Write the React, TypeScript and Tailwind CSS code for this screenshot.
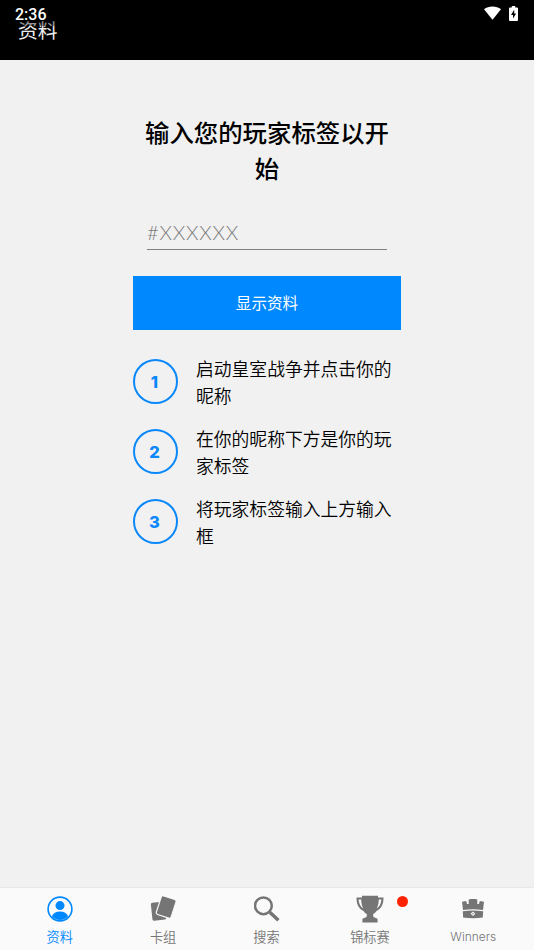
import type { ReactNode } from "react";
import clsx from "clsx";

interface Tab {
  id: string;
  label: string;
  icon: ReactNode;
  badge?: boolean;
}

const STEPS = [
  "启动皇室战争并点击你的昵称",
  "在你的昵称下方是你的玩家标签",
  "将玩家标签输入上方输入框",
];

function ProfileIcon() {
  return (
    <svg width="26" height="26" viewBox="0 0 26 26" fill="currentColor">
      <circle cx="13" cy="13" r="11.9" fill="none" stroke="currentColor" strokeWidth="1.6" />
      <circle cx="13" cy="9.6" r="4.5" />
      <path d="M4.9 20.2C6 17 9 15.4 13 15.4s7 1.6 8.1 4.8A11 11 0 0 1 13 24a11 11 0 0 1-8.1-3.8z" />
    </svg>
  );
}

function CardsIcon() {
  return (
    <svg width="26" height="26" viewBox="0 0 26 26" fill="currentColor">
      <rect x="1.6" y="6.2" width="14" height="18" rx="1.6" transform="rotate(-6 8.6 15)" />
      <rect
        x="8.4"
        y="1.2"
        width="15.6"
        height="19.6"
        rx="2"
        transform="rotate(18 16.2 11)"
        stroke="#fafafa"
        strokeWidth="1.2"
      />
    </svg>
  );
}

function SearchIcon() {
  return (
    <svg width="26" height="26" viewBox="0 0 26 26" fill="none" stroke="currentColor">
      <circle cx="9.4" cy="9.8" r="8.4" strokeWidth="2.5" />
      <path d="M15.8 16.2l8.6 8" strokeWidth="3.5" />
    </svg>
  );
}

function TrophyIcon() {
  return (
    <svg width="28" height="28" viewBox="0 0 28 28" fill="currentColor">
      <path d="M6 .8h16v1.8h5.5c0 7-2.3 11.3-7 13.4-1 1.5-2.2 2.5-3.3 3.1v2c0 1.1 1.1 1.7 3.3 2.2.8.2 1.1.7 1.1 1.4v2.8H6.4v-2.8c0-.7.3-1.2 1.1-1.4 2.2-.5 3.3-1.1 3.3-2.2v-2c-1.1-.6-2.3-1.6-3.3-3.1C2.8 13.9.5 9.6.5 2.600H6z" />
      <path
        d="M2.6 4.6h2.6c.1 3.4.7 6.1 1.9 8.8-2.8-1.7-4.2-4.700-4.500-8.800zM25.400 4.600h-2.600c-.1 3.400-.7 6.100-1.900 8.800 2.800-1.700 4.200-4.700 4.500-8.800z"
        fill="#fafafa"
      />
    </svg>
  );
}

function CrownIcon() {
  return (
    <svg width="24" height="22" viewBox="0 0 24 22" fill="currentColor">
      <path d="M1 3.8l4.2-.9.8 3h1.700V1.500c2.900-.6 5.700-.6 8.600 0v4.400H18l.8-3 4.200.9-1 8.300c-6.700-1.200-13.300-1.200-20 0z" />
      <path d="M1.800 13.300c6.800-1.100 13.600-1.100 20.400 0l-.4 6.300c-6.500 1-13.100 1-19.600 0z" />
      <path d="M12 13.400l2.400 2.300-2.400 2.300-2.400-2.300z" fill="#fafafa" />
      <path d="M12 14.900l.9.800-.9.800-.9-.8z" />
    </svg>
  );
}

const TABS: Tab[] = [
  { id: "profile", label: "资料", icon: <ProfileIcon /> },
  { id: "decks", label: "卡组", icon: <CardsIcon /> },
  { id: "search", label: "搜索", icon: <SearchIcon /> },
  { id: "tournaments", label: "锦标赛", icon: <TrophyIcon />, badge: true },
  { id: "winners", label: "Winners", icon: <CrownIcon /> },
];

function Header() {
  return (
    <header className="relative h-[60px] shrink-0 bg-black text-white">
      <h1 className="pl-[18px] pt-[16px] text-[19.8px] leading-[28px] text-[#eeeeee]">资料</h1>

      {/* Status bar is drawn over the title */}
      <div className="absolute inset-x-0 top-0 flex h-[26px] items-center justify-between bg-gradient-to-b from-black/60 to-black/35 pl-[15px] pr-[16px]">
        <span className="pt-[3px] font-['Roboto',sans-serif] text-[16px] font-medium leading-[24px]">
          2:36
        </span>
        <div className="flex items-center gap-[8px]">
          <svg width="17" height="14" viewBox="0 0 17 14" fill="currentColor">
            <path d="M8.5 13.8L0 3.2C4.6-.5 12.4-.5 17 3.2z" />
          </svg>
          <svg width="9" height="15" viewBox="0 0 9 15">
            <path
              d="M1 1.6h1.800V0h3.400v1.600H8a1 1 0 0 1 1 1V14a1 1 0 0 1-1 1H1a1 1 0 0 1-1-1V2.600a1 1 0 0 1 1-1z"
              fill="currentColor"
            />
            <path d="M5.200 3.800L2 9h2v3.600L7.100 7.500h-1.900z" fill="#000" />
          </svg>
        </div>
      </div>
    </header>
  );
}

function Step({ index, text }: { index: number; text: string }) {
  return (
    <li className="flex h-[53px] items-center gap-[18px]">
      <span className="flex size-[45px] shrink-0 items-center justify-center rounded-full border-2 border-[#0a88fa] pr-[2px] pt-[2px] font-['Inter',sans-serif] text-[16.5px] font-extrabold text-[#0a88fa]">
        {index}
      </span>
      <p className="w-[200px] text-[17.8px] font-[350] leading-[26.5px] text-black">{text}</p>
    </li>
  );
}

function TabBar({ active }: { active: string }) {
  return (
    <nav className="flex h-[63px] shrink-0 border-t border-[#e8e8e8] bg-[#fafafa] pl-[8px] pr-[9px]">
      {TABS.map((tab) => (
        <button
          key={tab.id}
          type="button"
          className={clsx(
            "relative flex flex-1 basis-0 flex-col items-center",
            tab.id === active ? "text-[#0088ff]" : "text-[#757575]"
          )}
        >
          <span className="mt-[7px] flex h-[28px] items-center justify-center">{tab.icon}</span>
          <span
            className={clsx(
              "mt-[4px] leading-[20px]",
              tab.id === "winners"
                ? "font-['Inter',sans-serif] text-[12px] font-light"
                : "text-[13.2px] font-[350]"
            )}
          >
            {tab.label}
          </span>
          {tab.badge && (
            <span className="absolute left-[79px] top-[8px] size-[11px] rounded-full bg-[#ff2200]" />
          )}
        </button>
      ))}
    </nav>
  );
}

export default function App() {
  return (
    <div className="flex h-[950px] w-[534px] flex-col overflow-hidden bg-[#f1f1f1] font-['Noto_Sans_CJK_SC',sans-serif]">
      <Header />

      <main className="ml-[133px] flex w-[268px] flex-1 flex-col pt-[54px]">
        <h2 className="mx-auto w-[250px] text-center text-[24.4px] font-medium leading-[36px] text-black">
          输入您的玩家标签以开始
        </h2>

        <input
          type="text"
          placeholder="#XXXXXX"
          className="mx-auto mt-[30px] h-[34px] w-[240px] border-b border-[#808080] bg-transparent pb-[1px] font-['Lato',sans-serif] text-[20px] font-light tracking-[0.8px] text-black outline-none placeholder:text-[#7c7c7c]"
        />

        <button type="button" className="mt-[26px] h-[54px] w-full bg-[#0088ff] text-[15.6px] text-white">
          显示资料
        </button>

        <ol className="mt-[25px] flex flex-col gap-[17px]">
          {STEPS.map((text, i) => (
            <Step key={text} index={i + 1} text={text} />
          ))}
        </ol>
      </main>

      <TabBar active="profile" />
    </div>
  );
}
